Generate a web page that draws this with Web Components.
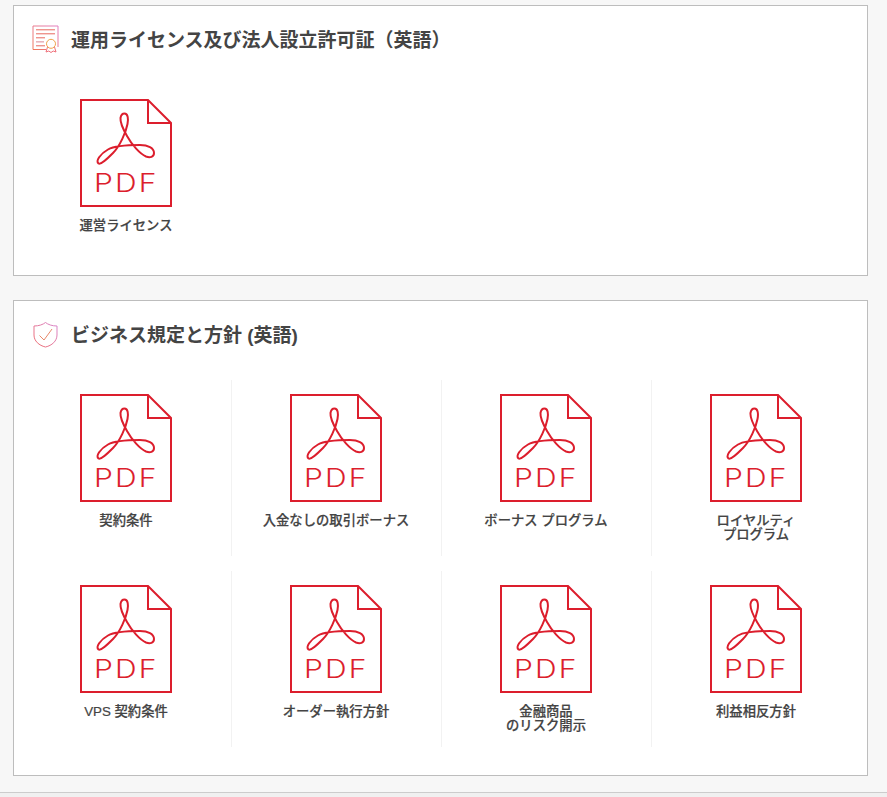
<!DOCTYPE html>
<html lang="ja">
<head>
<meta charset="utf-8">
<title>Documents</title>
<style>
  html, body { margin: 0; background: #f7f7f7; }
  body { font-family: "Liberation Sans", "Noto Sans CJK JP", sans-serif; color: #444; height: 797px; overflow: hidden; }
  main { display: flex; flex-direction: column; gap: 24px; padding: 5px 19px 0 13px; }
</style>
</head>
<body>
<main>
  <doc-section heading="運用ライセンス及び法人設立許可証（英語）" icon="cert">
    <doc-item>運営ライセンス</doc-item>
  </doc-section>
  <doc-section heading="ビジネス規定と方針 (英語)" icon="shield" style="padding-bottom: 28px">
    <doc-item>契約条件</doc-item>
    <doc-item>入金なしの取引ボーナス</doc-item>
    <doc-item>ボーナス プログラム</doc-item>
    <doc-item>ロイヤルティ<br>プログラム</doc-item>
    <doc-item>VPS 契約条件</doc-item>
    <doc-item>オーダー執行方針</doc-item>
    <doc-item>金融商品<br>のリスク開示</doc-item>
    <doc-item>利益相反方針</doc-item>
  </doc-section>
</main>
<page-foot></page-foot>

<script>
// small gradient line icons next to the section headings
const ICONS = {
  cert: `<svg width="28" height="28" viewBox="0 0 28 28" fill="none" stroke="url(#g)" stroke-width="1" style="overflow:visible">
    <defs><linearGradient id="g" x1="0" y1="1" x2="1" y2="0"><stop offset="0" stop-color="#f0785a"/><stop offset="1" stop-color="#e27fc0"/></linearGradient></defs>
    <path d="M14 23.500H1V0H26V21"/>
    <path d="M4 3.800H23M4 7.800H23M4 11.800H13M4 19.800H13" stroke="#e8685f"/>
    <path d="M4 15.800H12" stroke="#e8b4bc" stroke-width="1.600"/>
    <circle cx="19" cy="17.800" r="4.500" stroke="#f0a24a"/>
    <path d="M15.500 21L14 26L16.800 25L19 26.500L21.200 25L24 26L22.500 21" stroke="#ef6f7a"/>
  </svg>`,
  shield: `<svg width="28" height="28" viewBox="0 0 28 28" fill="none" stroke="url(#h)" stroke-width="1">
    <defs><linearGradient id="h" x1="0" y1="1" x2="1" y2="0"><stop offset="0" stop-color="#ee6a6a"/><stop offset="1" stop-color="#d887d0"/></linearGradient></defs>
    <path d="M13.500 1.500C16 3.500 20 5 25 5V14C25 20 20 24.500 13.500 26C7 24.500 2 20 2 14V5C7 5 11 3.500 13.500 1.500Z"/>
    <path d="M7.500 14.500L12 19L20 8" stroke="#e8886a"/>
  </svg>`
};

class DocSection extends HTMLElement {
  constructor() {
    super();
    this.attachShadow({ mode: "open" }).innerHTML = `
      <style>
        :host { display: block; background: #fff; border: 1px solid #bdbdbd; padding-bottom: 14px; }
        header { display: flex; align-items: center; gap: 11px; height: 67px; padding: 0 0 12px 18px; }
        header div { display: flex; width: 28px; height: 28px; }
        h2 { margin: 4px 0 0; font: 700 19px/1.2 "Liberation Sans", "Noto Sans CJK JP", sans-serif; color: #444; }
        .grid { display: grid; grid-template-columns: repeat(4, 210px); row-gap: 15px; padding-left: 7px; }
      </style>
      <header><div class="ico"></div><h2></h2></header>
      <div class="grid"><slot></slot></div>`;
  }
  connectedCallback() {
    this.shadowRoot.querySelector("h2").textContent = this.getAttribute("heading") || "";
    this.shadowRoot.querySelector(".ico").innerHTML = ICONS[this.getAttribute("icon")] || "";
  }
}
customElements.define("doc-section", DocSection);

class PdfIcon extends HTMLElement {
  constructor() {
    super();
    this.attachShadow({ mode: "open" }).innerHTML = `
      <style>:host { display: block; width: 92px; height: 108px; } svg { display: block; }</style>
      <svg width="92" height="108" viewBox="0 0 92 108" fill="none" stroke="#dc1e2d" stroke-width="2">
        <path d="M1 1H68L91 24V107H1Z"/>
        <path d="M68 1V24H91"/>
        <path d="M44.500 14.500C48 14.500 48.500 20 47.500 25C46 33 40 47 33 54C27 60 21 66 18.500 64.500C15.500 62 20 55 28 50.500C35 46.500 50 46 60 46C68 46 74 49 74 54C74 58 70 59 66 57.500C60 55 52 46 47 37C43 30 40 24 40.500 19C41 16 42 14.500 44.500 14.500Z"/>
        <text transform="translate(14 92.500) scale(1.200 1)" fill="#dc1e2d" stroke="none" font-family="Inter, 'Liberation Sans', sans-serif" font-weight="300" font-size="25" letter-spacing="1.800">PDF</text>
      </svg>`;
  }
}
customElements.define("pdf-icon", PdfIcon);

class DocItem extends HTMLElement {
  constructor() {
    super();
    this.attachShadow({ mode: "open" }).innerHTML = `
      <style>
        :host { display: block; height: 176px; box-sizing: border-box; padding-top: 14px; box-shadow: inset 1px 0 0 #f2f2f2; text-align: center; }
        :host(:nth-child(4n+1)) { box-shadow: none; }
        pdf-icon { margin: 0 auto; }
        p { margin: 12px 0 0; font: 500 13.330px/14px "Liberation Sans", "Noto Sans CJK JP", sans-serif; color: #444; -webkit-text-stroke: 0.2px #444; }
      </style>
      <pdf-icon></pdf-icon>
      <p><slot></slot></p>`;
  }
}
customElements.define("doc-item", DocItem);

class PageFoot extends HTMLElement {
  constructor() {
    super();
    this.attachShadow({ mode: "open" }).innerHTML = `
      <style>:host { display: block; margin-top: 16px; height: 40px; background: #f0f0f0; border-top: 1px solid #ccc; }</style>`;
  }
}
customElements.define("page-foot", PageFoot);
</script>
</body>
</html>
